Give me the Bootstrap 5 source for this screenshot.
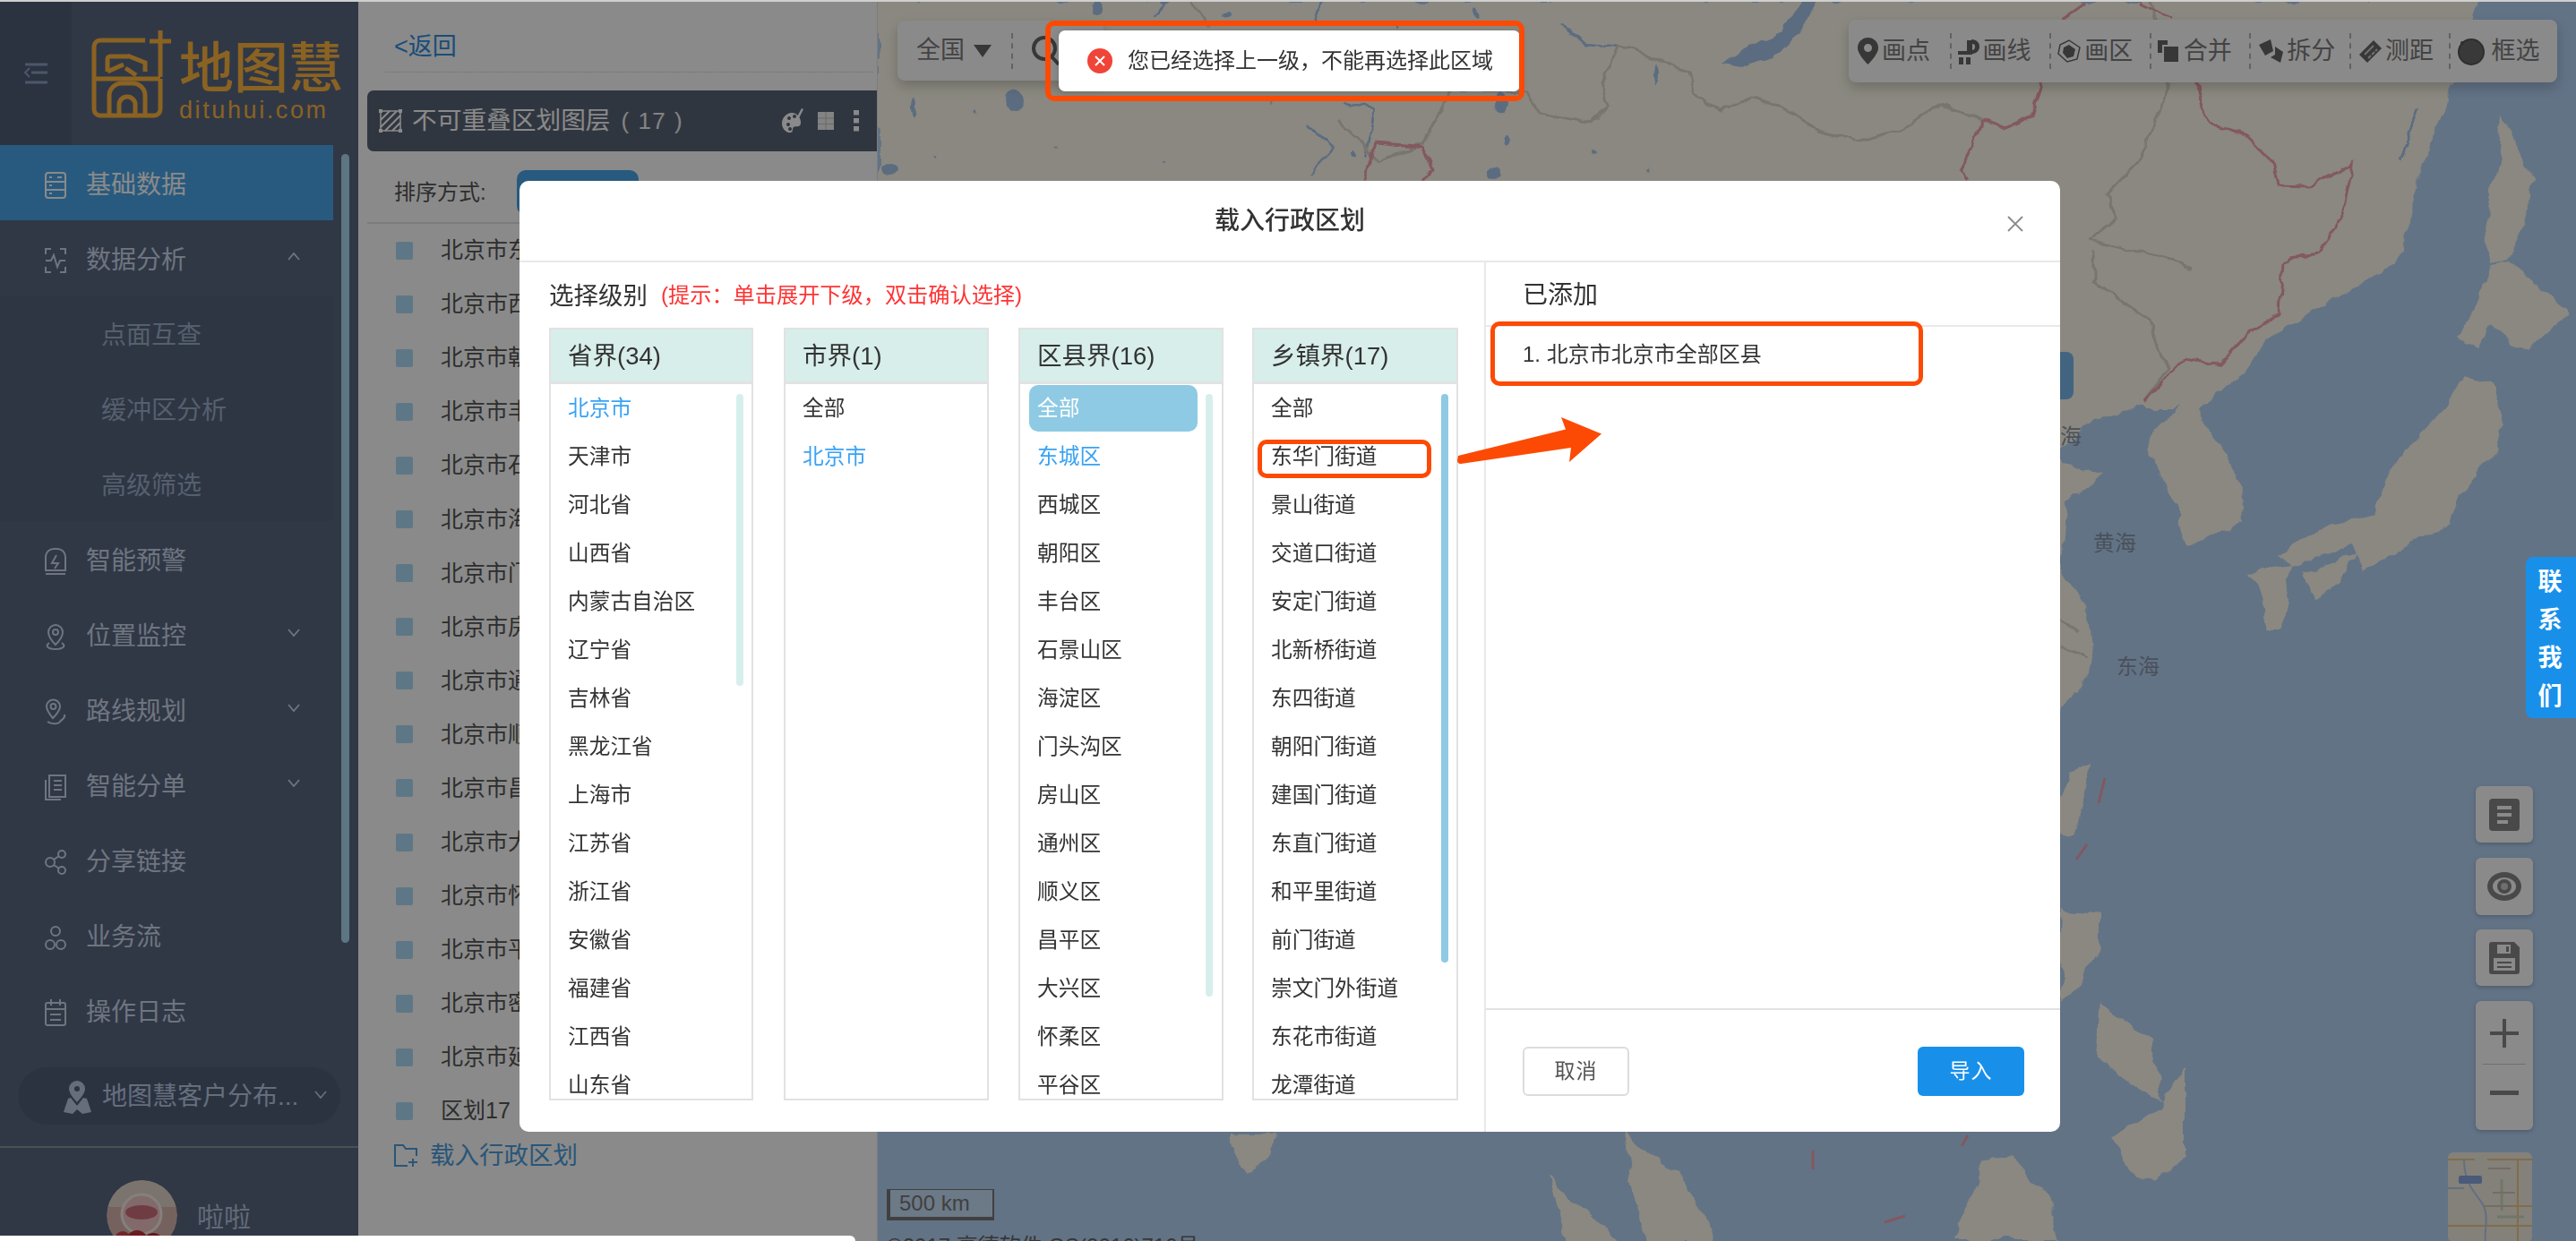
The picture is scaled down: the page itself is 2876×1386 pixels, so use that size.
<!DOCTYPE html>
<html lang="zh-CN">
<head>
<meta charset="utf-8">
<title>地图慧</title>
<link href="https://cdn.jsdelivr.net/npm/bootstrap@5.3.0/dist/css/bootstrap.min.css" rel="stylesheet">
<style>
html,body{width:2876px;height:1386px;margin:0;overflow:hidden;background:#fff;font-family:"Liberation Sans","Noto Sans CJK SC",sans-serif;color:#333}
.top-edge{height:2px;background:#cfcfcf;position:relative;z-index:1060}
.app-shell{height:1384px}
.side-bar{width:400px;flex:none;background:#596882;position:relative;overflow:hidden}
.brand-row{height:160px}
.brand-strip{width:80px;background:#505e76;color:#8da2c6}
.brand-logo{color:#ffb53f;padding-left:20px;gap:8px}
.brand-name{font-size:61px;line-height:66px;font-weight:500;letter-spacing:0;white-space:nowrap;margin-top:12px}
.brand-url{font-size:27px;line-height:26px;letter-spacing:2.6px;margin-top:0;font-family:"Liberation Sans",sans-serif}
.side-link{height:84px;width:372px;padding:6px 0 0 50px;font-size:28px;color:#cdd9eb;gap:22px;position:relative}
.side-link svg.ico{width:24px;height:32px;flex:none}
.side-link.on{background:#4aa7eb;color:#fff}
.side-sub{background:#55647e;width:372px}
.side-sub .side-link{padding-left:113px;color:#a0b0ca}
.side-chev{position:absolute;left:321px;top:50%;width:14px;height:9px;margin-top:-6px}
.side-thumb{position:absolute;left:381px;top:170px;width:9px;height:881px;border-radius:5px;background:#aed8f0}
.side-pill{margin:22px 20px 0;height:64px;border-radius:32px;background:#505f79;color:#bccbe6;font-size:28px;padding:2px 0 0 50px;gap:12px;position:relative;white-space:nowrap}
.side-pill .side-chev{left:331px}
.side-sep{height:2px;background:#8e9395;margin-top:24px}
.side-user{padding:36px 0 0 119px;gap:22px;color:#b5c4de;font-size:30px}
.user-pic{width:79px;height:79px;border-radius:50%;flex:none}
.layer-pane{width:580px;flex:none;background:#fff;padding:0 0 0 10px;border-right:1px solid #e6e6e6;position:relative}
.back-row{height:79px;margin-left:20px;margin-right:4px;padding-left:10px;border-bottom:1px dotted #d0d0d0;font-size:27px;color:#2d8fe0;line-height:100px}
.layer-head{margin-top:20px;height:68px;background:#596476;border-radius:7px 0 0 7px;color:#fff;font-size:27.7px;padding-left:12px;white-space:nowrap}
.layer-count{font-size:26px;margin-left:12px;letter-spacing:1.5px;color:#f2f2f2}
.head-tools{margin-left:auto;gap:16px;padding-right:20px}
.sort-row{height:81px;border-bottom:2px solid #e3e3e3;font-size:24px;padding:13px 0 0 30px;gap:34px;color:#555}
.sort-btn{width:136px;height:50px;border-radius:10px;background:#4aa7eb;border:0}
.layer-line{height:60.05px;padding-left:32px;gap:31px;font-size:25px;color:#555;white-space:nowrap}
.layer-dot{width:19px;height:20px;background:#aedcf8;border-radius:2px;flex:none}
.load-row{height:40px;padding-left:30px;gap:12px;font-size:27.5px;color:#4b9fe0}
.map-pane{flex:1 1 auto;position:relative;overflow:hidden;background:#b6d4f8}
.map-svg{position:absolute;left:0;top:-2px;width:1896px;height:1386px}
.tool-left,.tool-right{position:absolute;background:#fff;border-radius:8px;box-shadow:0 6px 14px rgba(0,0,0,.2);font-size:27px;color:#7d7d7d}
.tool-left{left:22px;top:21px;width:230px;height:67px;padding-left:21px}
.tool-right{left:1084px;top:20px;width:791px;height:70px;padding-left:10px}
.tool-item{width:112px;gap:4px;padding-left:0;white-space:nowrap;position:relative;height:44px}
.tool-item svg{flex:none}
.tool-item:not(:last-child)::after{content:"";position:absolute;right:7px;top:2px;height:40px;border-right:2px dashed #b5b5b5}
.tool-tri{width:0;height:0;border-left:10px solid transparent;border-right:10px solid transparent;border-top:14px solid #666;margin-left:10px}
.tool-bar-v{height:40px;border-right:2px dashed #b5b5b5;margin:0 20px 0 22px}
.float-btn{position:absolute;left:1784px;width:64px;background:#fff;border-radius:6px;box-shadow:0 2px 5px rgba(0,0,0,.2)}
.mini-map{position:absolute;left:1753px;top:1285px;width:94px;height:100px;border-radius:6px;overflow:hidden;background:#f4efe2}
.scale-mark{position:absolute;left:10px;top:1326px;width:120px;height:35px;border:solid #777;border-width:1px 2px 4px 4px;background:rgba(255,255,255,.25);font-size:24px;line-height:29px;padding-left:10px;color:#777}
.map-copy{position:absolute;left:10px;top:1372px;font-size:24px;color:#666;white-space:nowrap}
.modal-backdrop.dim-on{opacity:.46;background:#000}
.modal-dialog.load-dlg{margin:202px 0 0 580px;width:1720px;max-width:none}
.load-dlg .modal-content{height:1062px;border:0;border-radius:10px;overflow:hidden;--bs-modal-border-width:0}
.load-dlg .modal-header{height:91px;flex:none;border-bottom:2px solid #e8e8e8;padding:0;position:relative;justify-content:center;border-radius:0}
.load-dlg .modal-title{font-size:28px;font-weight:500;color:#333;line-height:1;margin-top:1px}
.dlg-x{position:absolute;right:40px;top:38px;width:20px;height:20px;border:0;background:none;padding:0;line-height:0}
.pick-pane{width:1079px;flex:none;border-right:2px solid #e8e8e8;padding:0 0 0 33px}
.pick-title{height:73px;font-size:27.5px;color:#333;gap:15px;padding-top:2px}
.pick-hint{font-size:24.2px;color:#f33}
.pick-cols{gap:34px}
.pick-col{height:863px;border:2px solid #e2e2e2;border-radius:0;position:relative;overflow:hidden}
.w-a{width:228px}.w-b{width:229px}.w-c{width:229px;margin-left:-1px}.w-d{width:230px;margin-left:-2px}
.pick-head{height:61px;flex:none;background:#d7eeea;border-bottom:3px solid #e2e2e2;font-size:27.5px;padding:2px 0 0 19px;color:#333;line-height:1}
.pick-item{height:54px;padding:2px 0 0 19px;font-size:23.7px;color:#333;white-space:nowrap;flex:none}
.pick-item.blue{color:#38a2f5}
.pick-item.sel{background:#8ecae3;color:#fff;margin:1px 27px 1px 10px;height:52px;padding-left:9px;border-radius:10px}
.pick-bar{position:absolute;width:8px;border-radius:4px;background:#d6efec}
.pick-bar.hot{background:#8ecae3}
.added-head{height:72px;border-bottom:2px solid #e8e8e8;font-size:28px;padding:4px 0 0 41px;color:#333;flex:none}
.added-body{padding:15px 0 0 41px;font-size:24px;color:#333;line-height:32px}
.added-foot{height:138px;flex:none;border-top:2px solid #e2e2e2;padding:0 40px 0 41px}
.foot-cancel,.foot-ok{width:119px;height:55px;font-size:23px;border-radius:6px;padding:0;letter-spacing:1px}
.foot-cancel{border:2px solid #dcdcdc;background:#fff;color:#555}
.foot-ok{border:0;background:#1890ea;color:#fff}
.tip-toast{position:absolute;left:1182px;top:34px;width:515px;height:68px;background:#fff;border-radius:7px;z-index:1062;font-size:24px;color:#333;padding-left:32px;gap:17px;white-space:nowrap;box-shadow:0 2px 8px rgba(0,0,0,.15)}
.mark-box{position:absolute;border:solid #fc4a05;border-width:6px;border-radius:10px;z-index:1063;pointer-events:none}
.mark-arrow{position:absolute;left:0;top:0;width:2876px;height:1386px;z-index:1063;pointer-events:none}
.contact-tab{position:absolute;left:2820px;top:622px;width:56px;height:180px;background:#1890ea;border-radius:8px 0 0 8px;z-index:1061;color:#fff;font-weight:700;font-size:27px;line-height:42.5px;padding-top:7px;padding-right:2px}
.dl-edge{position:absolute;left:0;top:1380px;width:955px;height:6px;background:#fff;border-radius:0 8px 0 0;z-index:1061}
</style>
</head>
<body>
<div class="top-edge"></div>
<div class="app-shell d-flex">
  <aside class="side-bar">
    <div class="brand-row d-flex">
      <div class="brand-strip d-flex align-items-center justify-content-center">
        <svg width="28" height="24" viewBox="0 0 28 24" fill="none" stroke="currentColor" stroke-width="3"><path d="M2 2h25M9 11h18M2 22h25"/><path d="M7 6l-5 5 5 5" stroke-width="2"/></svg>
      </div>
      <div class="brand-logo d-flex align-items-start">
        <svg width="92" height="102" viewBox="98 32 92 102" fill="none" stroke="currentColor" stroke-width="5" style="margin-top:30px;flex:none">
          <path d="M177 34v52M165 46h24"/>
          <path d="M160 45h-50a7 7 0 0 0-7 7v70a7 7 0 0 0 7 7h60a7 7 0 0 0 7-7V88"/>
          <path d="M103 88h74"/>
          <path d="M118 80V66a3 3 0 0 1 3-3h20M118 80l18-8M140 62l20 8v10M150 84l-12-8"/>
          <path d="M120 129v-22a14 14 0 0 1 14-14h12a14 14 0 0 1 14 14v22"/>
          <path d="M131 129v-12a9 9 0 0 1 18 0v12"/>
        </svg>
        <div style="margin-top:30px">
          <div class="brand-name">地图慧</div>
          <div class="brand-url">dituhui.com</div>
        </div>
      </div>
    </div>
    <nav class="nav flex-column d-block">
      <a class="nav-link side-link on d-flex align-items-center"><svg class="ico" viewBox="0 0 24 32" fill="none" stroke="currentColor" stroke-width="2"><rect x="1" y="2" width="22" height="28" rx="3"/><path d="M1 12h22M1 21h22M5 7h3M5 16h3M5 25h3M14 7h5"/></svg>基础数据</a>
      <a class="nav-link side-link d-flex align-items-center"><svg class="ico" viewBox="0 0 24 32" fill="none" stroke="currentColor" stroke-width="2"><path d="M1 9V3h6M17 3h6v6M23 23v6h-6M7 29H1v-6M1 16h6l3-6 4 13 3-7h6"/></svg>数据分析<svg class="side-chev" viewBox="0 0 14 9" fill="none" stroke="currentColor" stroke-width="1.8"><path d="M1 8l6-7 6 7"/></svg></a>
      <div class="side-sub">
        <a class="nav-link side-link d-flex align-items-center">点面互查</a>
        <a class="nav-link side-link d-flex align-items-center">缓冲区分析</a>
        <a class="nav-link side-link d-flex align-items-center">高级筛选</a>
      </div>
      <a class="nav-link side-link d-flex align-items-center"><svg class="ico" viewBox="0 0 24 32" fill="none" stroke="currentColor" stroke-width="2"><path d="M1 10a9 9 0 0 1 9-8h4a9 9 0 0 1 9 8v16H1zM1 30h22M13 9l-5 9h7l-4 6"/></svg>智能预警</a>
      <a class="nav-link side-link d-flex align-items-center"><svg class="ico" viewBox="0 0 24 32" fill="none" stroke="currentColor" stroke-width="2"><path d="M12 25C6 19 4 15 4 11a8 8 0 0 1 16 0c0 4-2 8-8 14z"/><circle cx="12" cy="11" r="3"/><path d="M5 23c-6 4 0 7 7 7s13-3 7-7"/></svg>位置监控<svg class="side-chev" viewBox="0 0 14 9" fill="none" stroke="currentColor" stroke-width="1.8"><path d="M1 1l6 7 6-7"/></svg></a>
      <a class="nav-link side-link d-flex align-items-center"><svg class="ico" viewBox="0 0 24 32" fill="none" stroke="currentColor" stroke-width="2"><path d="M9 23C4 17 2 14 2 10a7.500 7.500 0 0 1 15 0c0 4-3 8-8 13z"/><circle cx="9.500" cy="10" r="3"/><path d="M3 27c4 3 12 3 14 0s6-3 5-8"/></svg>路线规划<svg class="side-chev" viewBox="0 0 14 9" fill="none" stroke="currentColor" stroke-width="1.8"><path d="M1 1l6 7 6-7"/></svg></a>
      <a class="nav-link side-link d-flex align-items-center"><svg class="ico" viewBox="0 0 24 32" fill="none" stroke="currentColor" stroke-width="2"><path d="M5 3h18v24H5zM1 8v22h17M10 9h9M10 14h9M10 19h9"/></svg>智能分单<svg class="side-chev" viewBox="0 0 14 9" fill="none" stroke="currentColor" stroke-width="1.8"><path d="M1 1l6 7 6-7"/></svg></a>
      <a class="nav-link side-link d-flex align-items-center"><svg class="ico" viewBox="0 0 24 32" fill="none" stroke="currentColor" stroke-width="2"><circle cx="6" cy="16" r="5"/><circle cx="19" cy="7" r="4"/><circle cx="19" cy="25" r="4"/><path d="M10 13l6-4M10 19l6 4"/></svg>分享链接</a>
      <a class="nav-link side-link d-flex align-items-center"><svg class="ico" viewBox="0 0 24 32" fill="none" stroke="currentColor" stroke-width="2"><circle cx="12" cy="9" r="5"/><circle cx="6" cy="24" r="5"/><circle cx="18" cy="24" r="5"/></svg>业务流</a>
      <a class="nav-link side-link d-flex align-items-center"><svg class="ico" viewBox="0 0 24 32" fill="none" stroke="currentColor" stroke-width="2"><rect x="1" y="5" width="22" height="25" rx="2"/><path d="M7 1v7M17 1v7M1 12h22M6 18h12M6 24h12"/></svg>操作日志</a>
    </nav>
    <div class="side-pill d-flex align-items-center">
      <svg width="32" height="38" viewBox="0 0 32 38" fill="currentColor"><path d="M16 1a9 9 0 0 0-9 9c0 6 9 15 9 15s9-9 9-15a9 9 0 0 0-9-9zm0 12a3 3 0 1 1 0-6 3 3 0 0 1 0 6zM6 21L1 36l10 2 5-5 6 5 10-2-5-15-4-1-7 9-7-9z"/></svg>
      地图慧客户分布...
      <svg class="side-chev" viewBox="0 0 14 9" fill="none" stroke="currentColor" stroke-width="1.8"><path d="M1 1l6 7 6-7"/></svg>
    </div>
    <div class="side-sep"></div>
    <div class="side-user d-flex align-items-center">
      <svg class="user-pic" viewBox="0 0 79 79"><defs><clipPath id="avc"><circle cx="39.500" cy="39.500" r="39.500"/></clipPath></defs><g clip-path="url(#avc)"><rect width="79" height="79" fill="#d8b5ae"/><rect y="0" width="79" height="30" fill="#e3d7cc"/><circle cx="39" cy="38" r="22" fill="#f0c5c5" stroke="#f5ece6" stroke-width="3"/><ellipse cx="39" cy="36" rx="18" ry="8" fill="#cf6f7c"/><circle cx="34" cy="68" r="12" fill="#c8323e"/><circle cx="52" cy="70" r="11" fill="#b92a36"/><circle cx="18" cy="66" r="9" fill="#cf4a50"/></g></svg>
      <span style="padding-top:4px">啦啦</span>
    </div>
    <div class="side-thumb"></div>
  </aside>

  <section class="layer-pane">
    <div class="back-row">&lt;返回</div>
    <div class="layer-head d-flex align-items-center">
      <svg width="28" height="28" viewBox="0 0 28 28" fill="none" stroke="#fff" stroke-width="2" style="margin-right:10px;flex:none"><rect x="3" y="3" width="22" height="22" stroke-width="1.500"/><path d="M3 13L13 3M3 21L21 3M8 25L25 8M16 25l9-9"/><path d="M1 1h4v4H1zM23 1h4v4h-4zM1 23h4v4H1zM23 23h4v4h-4z" fill="#fff" stroke="none"/></svg>
      不可重叠区划图层<span class="layer-count">( 17 )</span>
      <div class="head-tools d-flex align-items-center">
        <svg width="25" height="30" viewBox="0 0 25 30" fill="#fff"><path d="M11 6C5 7 1 12 1 18s5 11 10 10c3-1 1-4 3-6s7 1 8-4c1-6-5-13-11-12zM7 12a2 2 0 1 1 0 .1zm-1 7a2 2 0 1 1 0 .1zm7-9a2 2 0 1 1 0 .1zm-5 14a2 2 0 1 1 0 .1z" fill-rule="evenodd"/><path d="M17 12l6-11 2 1-6 12z"/></svg>
        <svg width="18" height="20" viewBox="0 0 18 20"><rect width="18" height="20" fill="#f2f2f2"/><path d="M9 0v20M0 7h18M0 13.500h18" stroke="#c4c4c4" stroke-width="1"/></svg>
        <svg width="6" height="24" viewBox="0 0 6 24" fill="#fff" style="margin-left:6px"><rect width="6" height="5.500"/><rect y="9" width="6" height="5.500"/><rect y="18" width="6" height="5.500"/></svg>
      </div>
    </div>
    <div class="sort-row d-flex align-items-center"><span>排序方式:</span><button class="sort-btn" type="button" aria-label="排序"></button></div>
    <div class="layer-line d-flex align-items-center"><span class="layer-dot"></span>北京市东城区</div>
    <div class="layer-line d-flex align-items-center"><span class="layer-dot"></span>北京市西城区</div>
    <div class="layer-line d-flex align-items-center"><span class="layer-dot"></span>北京市朝阳区</div>
    <div class="layer-line d-flex align-items-center"><span class="layer-dot"></span>北京市丰台区</div>
    <div class="layer-line d-flex align-items-center"><span class="layer-dot"></span>北京市石景山区</div>
    <div class="layer-line d-flex align-items-center"><span class="layer-dot"></span>北京市海淀区</div>
    <div class="layer-line d-flex align-items-center"><span class="layer-dot"></span>北京市门头沟区</div>
    <div class="layer-line d-flex align-items-center"><span class="layer-dot"></span>北京市房山区</div>
    <div class="layer-line d-flex align-items-center"><span class="layer-dot"></span>北京市通州区</div>
    <div class="layer-line d-flex align-items-center"><span class="layer-dot"></span>北京市顺义区</div>
    <div class="layer-line d-flex align-items-center"><span class="layer-dot"></span>北京市昌平区</div>
    <div class="layer-line d-flex align-items-center"><span class="layer-dot"></span>北京市大兴区</div>
    <div class="layer-line d-flex align-items-center"><span class="layer-dot"></span>北京市怀柔区</div>
    <div class="layer-line d-flex align-items-center"><span class="layer-dot"></span>北京市平谷区</div>
    <div class="layer-line d-flex align-items-center"><span class="layer-dot"></span>北京市密云区</div>
    <div class="layer-line d-flex align-items-center"><span class="layer-dot"></span>北京市延庆区</div>
    <div class="layer-line d-flex align-items-center"><span class="layer-dot"></span>区划17</div>
    <div class="load-row d-flex align-items-center">
      <svg width="28" height="28" viewBox="0 0 28 28" fill="none" stroke="currentColor" stroke-width="2"><path d="M15 25H1V2h9l3 4h12v8M21 17v9M16 21h10"/></svg>
      载入行政区划
    </div>
  </section>

  <main class="map-pane">
    <svg class="map-svg" viewBox="980 0 1896 1386" preserveAspectRatio="none">
      <defs>
        <filter id="coast" x="-5%" y="-5%" width="110%" height="110%"><feTurbulence type="fractalNoise" baseFrequency="0.035" numOctaves="3" seed="7"/><feDisplacementMap in="SourceGraphic" scale="16" xChannelSelector="R" yChannelSelector="G"/></filter>
        <filter id="wiggle" x="-5%" y="-5%" width="110%" height="110%"><feTurbulence type="fractalNoise" baseFrequency="0.06" numOctaves="2" seed="3"/><feDisplacementMap in="SourceGraphic" scale="9" xChannelSelector="R" yChannelSelector="G"/></filter>
      </defs>
      <g fill="#fffcec" filter="url(#coast)">
        <path d="M980 0H2770L2758 33 2730 120 2700 200 2682 280 2643 315 2580 350 2549 365 2518 400 2502 421 2475 440 2455 456 2463 477 2482 505 2502 534 2506 583 2480 595 2440 611 2432 585 2432 562 2408 530 2400 506 2404 477 2432 456 2385 456 2338 470 2315 491 2299 500 2299 520 2350 527 2325 545 2307 562 2299 632 2318 660 2334 696 2338 731 2318 770 2299 802 2200 1000 1500 1200 980 1200Z"/>
        <path d="M2794 130L2830 200 2815 260 2800 290 2784 294 2774 250 2790 180Z"/>
        <path d="M2745 375L2784 296 2800 292 2870 350 2820 395 2780 360 2765 390Z"/>
        <path d="M2752 415L2790 435 2788 500 2745 555 2735 585 2660 625 2637 636 2625 610 2560 632 2541 620 2590 590 2650 575 2670 520 2700 490 2745 430Z"/>
        <path d="M2510 640L2560 632 2548 700 2530 700 2525 665Z"/>
        <path d="M2572 640L2630 620 2610 655 2580 665Z"/>
        <path d="M2307 865L2334 851 2328 890 2315 932 2299 929 2300 890Z"/>
        <path d="M2303 1015L2345 1020 2345 1060 2320 1100 2300 1120Z"/>
        <path d="M2345 1120L2400 1160 2415 1230 2380 1210 2340 1180Z"/>
        <path d="M2355 1270L2410 1240 2440 1190 2440 1290 2410 1320 2385 1310Z"/>
        <path d="M2180 1386L2215 1300 2245 1290 2290 1340 2300 1386Z"/>
        <path d="M1728 1315L1810 1390H1750ZM1814 1264L1880 1320 1916 1386H1838L1820 1320Z"/>
        <path d="M1376 1264H1422L1418 1295 1390 1310 1380 1300Z"/>
      </g>
      <g fill="#a9c8ee" filter="url(#wiggle)">
        <path d="M2012 0L2029 0 2012 30 1990 60 1942 76 1922 72 1952 52 1990 36Z"/>
        <ellipse cx="1134" cy="112" rx="9" ry="12"/><ellipse cx="1020" cy="120" rx="3" ry="10"/><ellipse cx="1676" cy="115" rx="8" ry="11"/>
        <ellipse cx="1682" cy="157" rx="4" ry="6"/><ellipse cx="1849" cy="83" rx="3" ry="12"/><ellipse cx="1225" cy="10" rx="6" ry="8"/>
        <ellipse cx="1370" cy="18" rx="5" ry="4"/><ellipse cx="993" cy="190" rx="9" ry="7"/><ellipse cx="1667" cy="193" rx="6" ry="7"/>
        <ellipse cx="1509" cy="173" rx="3" ry="3"/><ellipse cx="1648" cy="15" rx="3" ry="7"/>
        <circle cx="1075" cy="55" r="1.500"/><circle cx="1090" cy="125" r="1.500"/><circle cx="1180" cy="165" r="1.500"/><circle cx="1300" cy="180" r="1.500"/><circle cx="1420" cy="115" r="1.500"/><circle cx="1560" cy="30" r="1.500"/><circle cx="1780" cy="170" r="2"/><circle cx="1840" cy="190" r="1.500"/><circle cx="1045" cy="175" r="1.500"/><circle cx="1140" cy="30" r="1.500"/>
      </g>
      <g fill="none" stroke="#a9c8ee" stroke-width="2.500" filter="url(#wiggle)">
        <path d="M1460 140L1490 165 1462 195M1480 0L1465 25M1745 28L1770 50 1795 52 1807 50M2700 120L2680 180M1525 175L1535 120 1500 115M1300 0L1290 20"/>
      </g>
      <g fill="none" stroke="#dcd8cc" stroke-width="3" filter="url(#wiggle)">
        <path d="M1807 50L1789 93 1795 117 1778 137 1718 127 1706 103M1807 50L1885 80 1891 107 1921 123 1957 110 1993 120 2029 147 2077 158 2124 143 2166 117 2214 133"/>
        <path d="M2423 93L2388 180 2352 217 2364 243 2333 267 2423 290 2447 300M2338 280L2338 315 2400 358 2420 414 2393 449"/>
        <path d="M1706 103L1620 100 1590 160 1540 180 1495 135"/>
        <path d="M2400 0L2423 93M1330 0L1350 30"/>
        <path d="M2300 720L2330 735M2300 690L2320 705"/>
      </g>
      <g fill="none" stroke="#f2a3ae" stroke-width="3" filter="url(#wiggle)">
        <path d="M2214 133L2238 143 2268 130 2280 93 2295 60 2304 20 2328 3M2388 3L2423 20M2214 133L2190 190 2196 202"/>
        <path d="M2453 93L2465 137 2507 150 2537 180 2543 207 2579 208 2627 183 2615 240 2591 283 2555 287 2549 294 2545 350 2510 372 2479 407 2440 400 2393 449"/>
        <path d="M1535 160L1590 165 1600 190 1590 202M1535 160L1525 202"/>
      </g>
      <path fill="none" stroke="#f2a3ae" stroke-width="3" d="M2350 869L2343 897M2330 943L2318 960M2024 1285V1306M2197 1268L2190 1280M2104 1365L2127 1358"/>
      <rect x="2290" y="393" width="25" height="53" rx="8" fill="#7ab9ef"/>
      <g font-family="'Noto Sans CJK SC',sans-serif" font-size="24" fill="#8a96a8">
        <text x="2337" y="615">黄海</text><text x="2363" y="753">东海</text><text x="2300" y="496">海</text>
      </g>
    </svg>

    <div class="tool-left d-flex align-items-center">
      <span>全国</span><span class="tool-tri"></span><span class="tool-bar-v"></span>
      <svg width="34" height="36" viewBox="0 0 34 36" fill="none" stroke="#666" stroke-width="4"><circle cx="15" cy="15" r="12"/><path d="M23 24l8 9"/></svg>
    </div>

    <div class="tool-right d-flex align-items-center">
      <div class="tool-item d-flex align-items-center">
        <svg width="23" height="30" viewBox="0 0 23 30" fill="#666"><path d="M11.500 0A11.500 11.500 0 0 0 0 11.500C0 19 11.500 30 11.500 30S23 19 23 11.500A11.500 11.500 0 0 0 11.500 0zm0 16a4.500 4.500 0 1 1 0-9 4.500 4.500 0 0 1 0 9z"/></svg><span>画点</span>
      </div>
      <div class="tool-item d-flex align-items-center">
        <svg width="24" height="30" viewBox="0 0 24 30" fill="#666"><path d="M0 15h10V3h5v-1c6 0 9 4 9 8s-3 8-8 8h-2l-1-4h3c2 0 3-2 3-4s-1-3-3-3v12H0zM1 22h5v8H1zM9 22h5v8H9z"/></svg><span>画线</span>
      </div>
      <div class="tool-item d-flex align-items-center">
        <svg width="26" height="26" viewBox="0 0 26 26"><path d="M13 1l12 8-3 13-11 3L1 16 3 6z" fill="none" stroke="#666" stroke-width="1.500"/><path d="M13 6l7 5-2 8-7 2-5-6 1-6z" fill="#666"/></svg><span>画区</span>
      </div>
      <div class="tool-item d-flex align-items-center">
        <svg width="23" height="24" viewBox="0 0 23 24" fill="#666" style="margin-right:2px"><path d="M0 0h11v5H5v9H0zM7 7h16v17H7z"/></svg><span>合并</span>
      </div>
      <div class="tool-item d-flex align-items-center">
        <svg width="27" height="26" viewBox="0 0 27 26" fill="#666" style="margin-left:2px"><path d="M0 6L13 0l3 13-9 5zM18 8l9 6-3 12-11-6 5-3z"/></svg><span>拆分</span>
      </div>
      <div class="tool-item d-flex align-items-center">
        <svg width="25" height="25" viewBox="0 0 25 25" style="margin-left:2px"><path d="M0 16L16 0l9 9L9 25z" fill="#666"/><path d="M6 16l10-10M10 20l3-3M14 16l3-3M18 12l2-2" stroke="#cfcfcf" stroke-width="2"/></svg><span>测距</span>
      </div>
      <div class="tool-item d-flex align-items-center" style="gap:6px">
        <svg width="32" height="32" viewBox="0 0 32 32"><circle cx="16" cy="17" r="14" fill="#6a6a6a" stroke="#555" stroke-width="2"/><circle cx="6" cy="7" r="2" fill="#555"/></svg><span>框选</span>
      </div>
    </div>

    <div class="float-btn d-flex align-items-center justify-content-center" style="top:876px;height:63px"><svg width="34" height="36" viewBox="0 0 34 36" fill="#888"><path d="M4 0h26a4 4 0 0 1 4 4v28a4 4 0 0 1-4 4H4a4 4 0 0 1-4-4V4a4 4 0 0 1 4-4zm5 8v4h16V8zm0 8v4h16v-4zm0 8v4h12v-4z" fill-rule="evenodd"/></svg></div>
    <div class="float-btn d-flex align-items-center justify-content-center" style="top:956px;height:64px"><svg width="38" height="34" viewBox="0 0 38 34"><ellipse cx="19" cy="17" rx="19" ry="16" fill="#888"/><ellipse cx="19" cy="17" rx="13" ry="10" fill="#fff"/><circle cx="19" cy="17" r="8" fill="#888"/><circle cx="19" cy="17" r="4" fill="#ccc"/></svg></div>
    <div class="float-btn d-flex align-items-center justify-content-center" style="top:1036px;height:63px"><svg width="34" height="36" viewBox="0 0 34 36" fill="#888"><path d="M3 0h25l6 6v27a3 3 0 0 1-3 3H3a3 3 0 0 1-3-3V3a3 3 0 0 1 3-3zm6 3v10h15V3zm10 2h3v6h-3zM5 18v14h24V18zm4 4h16v2H9zm0 5h16v2H9z" fill-rule="evenodd"/></svg></div>
    <div class="float-btn d-flex flex-column align-items-center" style="top:1116px;height:144px">
      <svg width="34" height="34" viewBox="0 0 34 34" stroke="#888" stroke-width="4" style="margin-top:19px"><path d="M17 1v32M1 17h32"/></svg>
      <div class="w-100 px-2" style="height:1px;margin-top:17px"><div style="height:1px;background:#ccc"></div></div>
      <svg width="32" height="6" viewBox="0 0 32 6" style="margin-top:29px"><rect width="32" height="5" fill="#888"/></svg>
    </div>
    <div class="mini-map">
      <svg width="94" height="100" viewBox="0 0 94 100" fill="none"><path d="M0 8h30M44 8h50M78 8v92M0 82h94M40 60h54" stroke="#efc98a" stroke-width="2"/><path d="M18 8c0 30 16 40 22 52s0 30 2 40M0 40h18" stroke="#b4cef0" stroke-width="2"/><path d="M60 30v35M55 72h30" stroke="#cfdcbc" stroke-width="3"/><rect x="12" y="26" width="26" height="9" rx="2" fill="#8aa8e0"/><path d="M45 18h25M50 45h25M46 60h22" stroke="#d2cbbc" stroke-width="2"/></svg>
    </div>
    <div class="scale-mark">500 km</div>
    <div class="map-copy">©2017 高德软件 GS(2016)710号</div>
  </main>
</div>

<div class="modal-backdrop fade show dim-on"></div>

<div class="modal d-block">
  <div class="modal-dialog load-dlg">
    <div class="modal-content">
      <div class="modal-header">
        <h5 class="modal-title">载入行政区划</h5>
        <button class="dlg-x" type="button" aria-label="关闭"><svg width="20" height="20" viewBox="0 0 20 20" fill="none" stroke="#888" stroke-width="1.800"><path d="M2 2l16 16M18 2L2 18"/></svg></button>
      </div>
      <div class="d-flex flex-grow-1" style="min-height:0">
        <div class="pick-pane">
          <div class="pick-title d-flex align-items-center"><span>选择级别</span><span class="pick-hint">(提示：单击展开下级，双击确认选择)</span></div>
          <div class="pick-cols d-flex">
            <div class="pick-col w-a d-flex flex-column">
              <div class="pick-head d-flex align-items-center">省界(34)</div>
              <div class="pick-item d-flex align-items-center blue">北京市</div>
              <div class="pick-item d-flex align-items-center">天津市</div>
              <div class="pick-item d-flex align-items-center">河北省</div>
              <div class="pick-item d-flex align-items-center">山西省</div>
              <div class="pick-item d-flex align-items-center">内蒙古自治区</div>
              <div class="pick-item d-flex align-items-center">辽宁省</div>
              <div class="pick-item d-flex align-items-center">吉林省</div>
              <div class="pick-item d-flex align-items-center">黑龙江省</div>
              <div class="pick-item d-flex align-items-center">上海市</div>
              <div class="pick-item d-flex align-items-center">江苏省</div>
              <div class="pick-item d-flex align-items-center">浙江省</div>
              <div class="pick-item d-flex align-items-center">安徽省</div>
              <div class="pick-item d-flex align-items-center">福建省</div>
              <div class="pick-item d-flex align-items-center">江西省</div>
              <div class="pick-item d-flex align-items-center">山东省</div>
              <span class="pick-bar" style="left:207px;top:72px;height:326px"></span>
            </div>
            <div class="pick-col w-b d-flex flex-column">
              <div class="pick-head d-flex align-items-center">市界(1)</div>
              <div class="pick-item d-flex align-items-center">全部</div>
              <div class="pick-item d-flex align-items-center blue">北京市</div>
            </div>
            <div class="pick-col w-c d-flex flex-column">
              <div class="pick-head d-flex align-items-center">区县界(16)</div>
              <div class="pick-item d-flex align-items-center sel">全部</div>
              <div class="pick-item d-flex align-items-center blue">东城区</div>
              <div class="pick-item d-flex align-items-center">西城区</div>
              <div class="pick-item d-flex align-items-center">朝阳区</div>
              <div class="pick-item d-flex align-items-center">丰台区</div>
              <div class="pick-item d-flex align-items-center">石景山区</div>
              <div class="pick-item d-flex align-items-center">海淀区</div>
              <div class="pick-item d-flex align-items-center">门头沟区</div>
              <div class="pick-item d-flex align-items-center">房山区</div>
              <div class="pick-item d-flex align-items-center">通州区</div>
              <div class="pick-item d-flex align-items-center">顺义区</div>
              <div class="pick-item d-flex align-items-center">昌平区</div>
              <div class="pick-item d-flex align-items-center">大兴区</div>
              <div class="pick-item d-flex align-items-center">怀柔区</div>
              <div class="pick-item d-flex align-items-center">平谷区</div>
              <span class="pick-bar" style="left:207px;top:72px;height:673px"></span>
            </div>
            <div class="pick-col w-d d-flex flex-column">
              <div class="pick-head d-flex align-items-center">乡镇界(17)</div>
              <div class="pick-item d-flex align-items-center">全部</div>
              <div class="pick-item d-flex align-items-center">东华门街道</div>
              <div class="pick-item d-flex align-items-center">景山街道</div>
              <div class="pick-item d-flex align-items-center">交道口街道</div>
              <div class="pick-item d-flex align-items-center">安定门街道</div>
              <div class="pick-item d-flex align-items-center">北新桥街道</div>
              <div class="pick-item d-flex align-items-center">东四街道</div>
              <div class="pick-item d-flex align-items-center">朝阳门街道</div>
              <div class="pick-item d-flex align-items-center">建国门街道</div>
              <div class="pick-item d-flex align-items-center">东直门街道</div>
              <div class="pick-item d-flex align-items-center">和平里街道</div>
              <div class="pick-item d-flex align-items-center">前门街道</div>
              <div class="pick-item d-flex align-items-center">崇文门外街道</div>
              <div class="pick-item d-flex align-items-center">东花市街道</div>
              <div class="pick-item d-flex align-items-center">龙潭街道</div>
              <span class="pick-bar hot" style="left:209px;top:72px;height:635px"></span>
            </div>
          </div>
        </div>
        <div class="flex-grow-1 d-flex flex-column">
          <div class="added-head d-flex align-items-center">已添加</div>
          <div class="added-body flex-grow-1">1. 北京市北京市全部区县</div>
          <div class="added-foot d-flex align-items-center justify-content-between">
            <button class="btn foot-cancel" type="button">取消</button>
            <button class="btn foot-ok" type="button">导入</button>
          </div>
        </div>
      </div>
    </div>
  </div>
</div>

<div class="tip-toast d-flex align-items-center">
  <svg width="28" height="28" viewBox="0 0 28 28" style="flex:none"><circle cx="14" cy="14" r="14" fill="#f04438"/><path d="M9 9l10 10M19 9L9 19" stroke="#fff" stroke-width="2"/></svg>
  您已经选择上一级，不能再选择此区域
</div>
<div class="mark-box" style="left:1167px;top:23px;width:535px;height:90px"></div>
<div class="mark-box" style="left:1404px;top:491px;width:194px;height:43px;border-width:5px"></div>
<div class="mark-box" style="left:1664px;top:359px;width:483px;height:72px;border-width:5px"></div>
<svg class="mark-arrow" viewBox="0 0 2876 1386"><path fill="#fc4a05" d="M1628 509L1748 479.500 1743 466 1788 484.500 1752 516 1754 500 1631 518Q1627 518 1627 514Z"/></svg>
<div class="contact-tab d-flex flex-column align-items-center"><span>联</span><span>系</span><span>我</span><span>们</span></div>
<div class="dl-edge"></div>
<script src="https://cdn.jsdelivr.net/npm/bootstrap@5.3.0/dist/js/bootstrap.bundle.min.js"></script>
</body>
</html>
